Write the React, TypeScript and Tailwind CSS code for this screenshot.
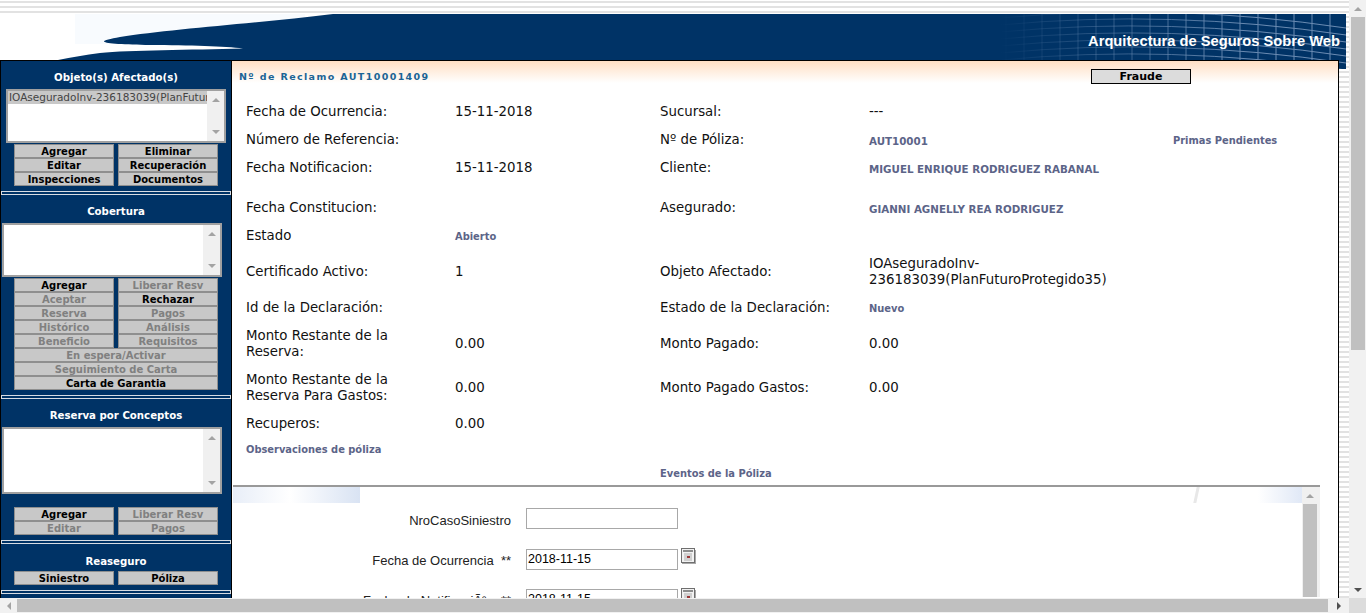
const navy = "#003366";

function Arrow({ dir, className = "fill-[#a3a3a3]" }: { dir: "up" | "down" | "left" | "right"; className?: string }) {
  const points = {
    up: "0,4 4,0 8,4",
    down: "0,0 8,0 4,4",
    left: "4,0 4,8 0,4",
    right: "0,0 0,8 4,4",
  }[dir];
  const horizontal = dir === "left" || dir === "right";
  return (
    <svg width={horizontal ? 4 : 8} height={horizontal ? 8 : 4} viewBox={horizontal ? "0 0 4 8" : "0 0 8 4"} className={className}>
      <polygon points={points} />
    </svg>
  );
}

function SideButton({ label, off, full }: { label: string; off?: boolean; full?: boolean }) {
  return (
    <div
      className={`flex h-[14px] items-center justify-center border border-[#8f8f8f] bg-[#c8c8c8] pt-px text-[10px] leading-none font-bold ${full ? "w-[204px]" : "w-[100px]"} ${off ? "text-[#808080]" : "text-black"}`}
    >
      {label}
    </div>
  );
}

function ButtonPairs({ pairs }: { pairs: [string, boolean, string, boolean][] }) {
  return (
    <div className="ml-[13px] flex w-[204px] flex-col">
      {pairs.map(([a, aOff, b, bOff]) => (
        <div key={a + b} className="flex justify-between">
          <SideButton label={a} off={aOff} />
          <SideButton label={b} off={bOff} />
        </div>
      ))}
    </div>
  );
}

function Listbox({ item, height, className }: { item?: string; height: string; className: string }) {
  return (
    <div className={`flex border-2 border-[#a0a0a0] bg-white ${height} ${className}`}>
      <div className="min-w-0 flex-1 overflow-hidden">
        {item && <div className="h-[13px] bg-[#c8c8c8] pl-px text-[10.5px] leading-[13px] whitespace-nowrap text-[#444]">{item}</div>}
      </div>
      <div className="flex w-[17px] flex-col items-center justify-between bg-[#f0f0f0] py-[7px]">
        <Arrow dir="up" />
        <Arrow dir="down" />
      </div>
    </div>
  );
}

function Divider() {
  return <div className="h-[4px] border border-[#d8dde3]" />;
}

function Title({ children, className }: { children: string; className: string }) {
  return <div className={`text-center text-[10.2px] leading-[14px] font-bold text-white ${className}`}>{children}</div>;
}

function Sidebar() {
  return (
    <aside className="h-full w-[232px] shrink-0 overflow-hidden border-x border-t border-black bg-[#003366]">
      <Title className="mt-[10px]">Objeto(s) Afectado(s)</Title>
      <Listbox item="IOAseguradoInv-236183039(PlanFuturoProtegido35)" height="h-[54px]" className="mx-[5px] mt-[4px] w-[220px]" />
      <div className="mt-px">
        <ButtonPairs
          pairs={[
            ["Agregar", false, "Eliminar", false],
            ["Editar", false, "Recuperación", false],
            ["Inspecciones", false, "Documentos", false],
          ]}
        />
      </div>
      <div className="mt-[5px]">
        <Divider />
      </div>

      <Title className="mt-[10px]">Cobertura</Title>
      <Listbox height="h-[54px]" className="ml-px mt-[4px] w-[220px]" />
      <div className="mt-px">
        <ButtonPairs
          pairs={[
            ["Agregar", false, "Liberar Resv", true],
            ["Aceptar", true, "Rechazar", false],
            ["Reserva", true, "Pagos", true],
            ["Histórico", true, "Análisis", true],
            ["Beneficio", true, "Requisitos", true],
          ]}
        />
        <div className="ml-[13px]">
          <SideButton label="En espera/Activar" off full />
          <SideButton label="Seguimiento de Carta" off full />
          <SideButton label="Carta de Garantia" full />
        </div>
      </div>
      <div className="mt-[5px]">
        <Divider />
      </div>

      <Title className="mt-[10px]">Reserva por Conceptos</Title>
      <Listbox height="h-[67px]" className="ml-px mt-[4px] w-[220px]" />
      <div className="mt-[13px]">
        <ButtonPairs
          pairs={[
            ["Agregar", false, "Liberar Resv", true],
            ["Editar", true, "Pagos", true],
          ]}
        />
      </div>
      <div className="mt-[5px]">
        <Divider />
      </div>

      <Title className="mt-[11px]">Reaseguro</Title>
      <div className="mt-[2px]">
        <ButtonPairs pairs={[["Siniestro", false, "Póliza", false]]} />
      </div>
      <div className="mt-[5px]">
        <Divider />
      </div>
    </aside>
  );
}

function Label({ children }: { children: string }) {
  return <div className="text-[13.33px] leading-[16px] text-[#111]">{children}</div>;
}

function Strong({ children, caps, flush }: { children: string; caps?: boolean; flush?: boolean }) {
  return (
    <div className={`leading-[14px] font-bold text-[#5c6488] ${caps ? "text-[10.3px]" : "text-[9.9px]"} ${flush ? "" : "mt-[2px]"}`}>
      {children}
    </div>
  );
}

function InfoRow({
  height,
  items = "items-center",
  a,
  b,
  c,
  d,
  e,
}: {
  height: string;
  items?: string;
  a?: React.ReactNode;
  b?: React.ReactNode;
  c?: React.ReactNode;
  d?: React.ReactNode;
  e?: React.ReactNode;
}) {
  return (
    <div className={`grid grid-cols-[209px_205px_209px_304px_120px] ${items} ${height}`}>
      <div className="pr-4">{a}</div>
      <div>{b}</div>
      <div>{c}</div>
      <div>{d}</div>
      <div>{e}</div>
    </div>
  );
}

function CalendarIcon() {
  return (
    <svg width="15" height="16" viewBox="0 0 15 16" className="-mt-px ml-[3px]">
      <rect x="0.5" y="0.5" width="13" height="14" fill="#f2f2f2" stroke="#6f6f6f" />
      <rect x="14" y="2" width="1" height="14" fill="#a8a8a8" />
      <rect x="1" y="15" width="14" height="1" fill="#a8a8a8" />
      <rect x="2" y="2" width="10" height="2" fill="#8c8c8c" />
      <path d="M3 6h8M3 8h8M3 10h8M3 12h8M4 5v8M6 5v8M8 5v8M10 5v8" stroke="#c4c4c4" strokeWidth="1" fill="none" />
      <rect x="6" y="8" width="3" height="2" fill="#9c3a3a" />
    </svg>
  );
}

function FormRow({
  label,
  value,
  calendar,
  height = "h-[41px]",
  labelPad = "pt-[4px]",
}: {
  label: string;
  value?: string;
  calendar?: boolean;
  height?: string;
  labelPad?: string;
}) {
  return (
    <div className={`flex items-start font-['Liberation_Sans',sans-serif] ${height}`}>
      <div className={`w-[278px] text-right text-[13px] leading-[15px] whitespace-pre text-[#222] ${labelPad}`}>{label}</div>
      <div className="ml-[15px] h-[21px] w-[152px] border border-[#a8a8a8] bg-white px-[1px] text-[12.5px] leading-[19px] text-black">{value}</div>
      {calendar && <CalendarIcon />}
    </div>
  );
}

function Main() {
  return (
    <main className="h-full w-[1107px] shrink-0 overflow-hidden border-t border-r border-black bg-white">
      <div className="flex h-[22px] items-start justify-between bg-linear-to-b from-[#ffdfc4] to-white">
        <div className="mt-[10px] ml-[7px] text-[9.5px] leading-[12px] font-bold tracking-[1.38px] text-[#1b6495]">Nº de Reclamo AUT10001409</div>
        <div className="mt-[8px] mr-[147px] flex h-[15px] w-[100px] items-center justify-center border border-black bg-[#dcdcdc] text-[11px] leading-none font-bold text-black">
          Fraude
        </div>
      </div>

      <div className="mt-[15px] pl-[14px]">
        <InfoRow height="h-[28px]" a={<Label>Fecha de Ocurrencia:</Label>} b={<Label>15-11-2018</Label>} c={<Label>Sucursal:</Label>} d={<Label>---</Label>} />
        <InfoRow
          height="h-[28px]"
          a={<Label>Número de Referencia:</Label>}
          c={<Label>Nº de Póliza:</Label>}
          d={<Strong caps>AUT10001</Strong>}
          e={<Strong>Primas Pendientes</Strong>}
        />
        <InfoRow
          height="h-[40px]"
          items="items-start pt-[6px]"
          a={<Label>Fecha Notificacion:</Label>}
          b={<Label>15-11-2018</Label>}
          c={<Label>Cliente:</Label>}
          d={<Strong caps>MIGUEL ENRIQUE RODRIGUEZ RABANAL</Strong>}
        />
        <InfoRow
          height="h-[28px]"
          a={<Label>Fecha Constitucion:</Label>}
          c={<Label>Asegurado:</Label>}
          d={<Strong caps>GIANNI AGNELLY REA RODRIGUEZ</Strong>}
        />
        <InfoRow height="h-[32px]" items="items-start pt-[6px]" a={<Label>Estado</Label>} b={<Strong>Abierto</Strong>} />
        <InfoRow
          height="h-[36px]"
          a={<Label>Certificado Activo:</Label>}
          b={<Label>1</Label>}
          c={<Label>Objeto Afectado:</Label>}
          d={<Label>IOAseguradoInv-236183039(PlanFuturoProtegido35)</Label>}
        />
        <InfoRow height="h-[36px]" a={<Label>Id de la Declaración:</Label>} c={<Label>Estado de la Declaración:</Label>} d={<Strong>Nuevo</Strong>} />
        <InfoRow
          height="h-[44px]"
          items="items-start pt-[2px]"
          a={<Label>Monto Restante de la Reserva:</Label>}
          b={<div className="pt-[8px]"><Label>0.00</Label></div>}
          c={<div className="pt-[8px]"><Label>Monto Pagado:</Label></div>}
          d={<div className="pt-[8px]"><Label>0.00</Label></div>}
        />
        <InfoRow height="h-[36px]" a={<Label>Monto Restante de la Reserva Para Gastos:</Label>} b={<Label>0.00</Label>} c={<Label>Monto Pagado Gastos:</Label>} d={<Label>0.00</Label>} />
        <InfoRow height="h-[36px]" a={<Label>Recuperos:</Label>} b={<Label>0.00</Label>} />
        <InfoRow height="h-[20px]" items="items-start pt-px" a={<Strong flush>Observaciones de póliza</Strong>} />
        <InfoRow height="h-[23px]" c={<Strong flush>Eventos de la Póliza</Strong>} />
      </div>

      {/* Embedded form frame */}
      <section className="ml-px h-[200px] w-[1087px] border-t-2 border-[#999]">
        <div className="flex h-[110px]">
          <div className="min-w-0 flex-1">
            <div className="flex h-[16px] items-stretch">
              <div className="w-[127px] bg-linear-to-r from-[#e8eef8] via-white via-45% to-[#d9e3f3]" />
              <div className="ml-[835px] w-[3px] -skew-x-12 bg-[#e8e8e8]" />
              <div className="ml-auto w-[44px] bg-linear-to-r from-white to-[#e0e8f6]" />
            </div>
            <div className="mt-[5px]">
              <FormRow label="NroCasoSiniestro" labelPad="pt-[5px]" />
              <FormRow label="Fecha de Ocurrencia  **" value="2018-11-15" calendar height="h-[40px]" />
              <FormRow label="Fecha de NotificaciÃ³n  **" value="2018-11-15" calendar />
            </div>
          </div>
          <div className="flex w-[18px] flex-col items-center bg-[#f0f0f0] pr-[3px]">
            <div className="flex h-[17px] items-center">
              <Arrow dir="up" />
            </div>
            <div className="w-[14px] flex-1 bg-[#c0c0c0]" />
          </div>
        </div>
      </section>
    </main>
  );
}

function Banner() {
  const verticals = Array.from({ length: 20 }, (_, i) => 1006 + i * 18);
  const waves = [20, 27, 34, 41, 48, 55, 62, 69];
  return (
    <div className="relative h-[55px] overflow-hidden bg-white">
      <svg className="absolute inset-0" width="1346" height="55" viewBox="0 0 1346 55">
        <defs>
          <linearGradient id="fade" x1="1000" x2="1250" y1="0" y2="0" gradientUnits="userSpaceOnUse">
            <stop offset="0" stopColor="#6a8bb2" stopOpacity="0" />
            <stop offset="1" stopColor="#6a8bb2" stopOpacity="1" />
          </linearGradient>
        </defs>
        <rect x="75" y="0" width="230" height="30" fill="#f8fbfe" />
        <path
          d="M333 0 C 260 9 170 15 120 23 C 110 25 104 26 104 27.5 C 106 30 125 30.5 150 31 C 190 31.5 225 32 243 34.5 C 190 36 130 36 100 39 C 85 41 72 43 58 46 L 58 55 L 1346 55 L 1346 0 Z"
          fill={navy}
        />
        {verticals.map((x) => (
          <line key={x} x1={x} y1="0" x2={x} y2="55" stroke="url(#fade)" />
        ))}
        {waves.map((y) => (
          <path key={y} d={`M1000 ${y - 16} Q 1170 ${y - 32} 1346 ${y - 6}`} fill="none" stroke="url(#fade)" />
        ))}
      </svg>
      <div className="absolute top-[18px] right-[6px] font-['Liberation_Sans',sans-serif] text-[14.7px] leading-[18px] font-bold text-white">
        Arquitectura de Seguros Sobre Web
      </div>
    </div>
  );
}

export default function App() {
  return (
    <div className="flex h-[613px] w-[1366px] flex-col overflow-hidden bg-white font-['DejaVu_Sans',Verdana,sans-serif]">
      <div className="flex min-h-0 flex-1">
        <div className="flex min-w-0 flex-1 flex-col overflow-hidden bg-[repeating-linear-gradient(to_bottom,#ffffff_0px,#ffffff_1px,#e2e2e2_1px,#e2e2e2_3px,#ffffff_3px,#ffffff_5px)]">
          <div className="h-[14px] shrink-0" />
          <div className="mr-[3px]">
            <Banner />
          </div>
          <div className="relative -mt-[9px] flex min-h-0 flex-1">
            <Sidebar />
            <Main />
          </div>
        </div>
        {/* Page scrollbar */}
        <div className="flex w-[17px] flex-col items-center justify-between bg-[#f1f1f1] pb-[6px]">
          <div className="flex w-full flex-1 flex-col items-center">
            <div className="flex h-[17px] items-center">
              <Arrow dir="up" />
            </div>
            <div className="h-[333px] w-[14px] bg-[#c0c0c0]" />
          </div>
          <Arrow dir="down" className="fill-[#505050]" />
        </div>
      </div>
      <div className="flex h-[15px] shrink-0 items-center bg-[#f1f1f1]">
        <div className="flex w-[17px] justify-center">
          <Arrow dir="left" />
        </div>
        <div className="h-[13px] w-[1311px] bg-[#c0c0c0]" />
        <div className="flex w-[21px] justify-center">
          <Arrow dir="right" className="fill-[#505050]" />
        </div>
        <div className="h-full flex-1 bg-[#dcdcdc]" />
      </div>
    </div>
  );
}
